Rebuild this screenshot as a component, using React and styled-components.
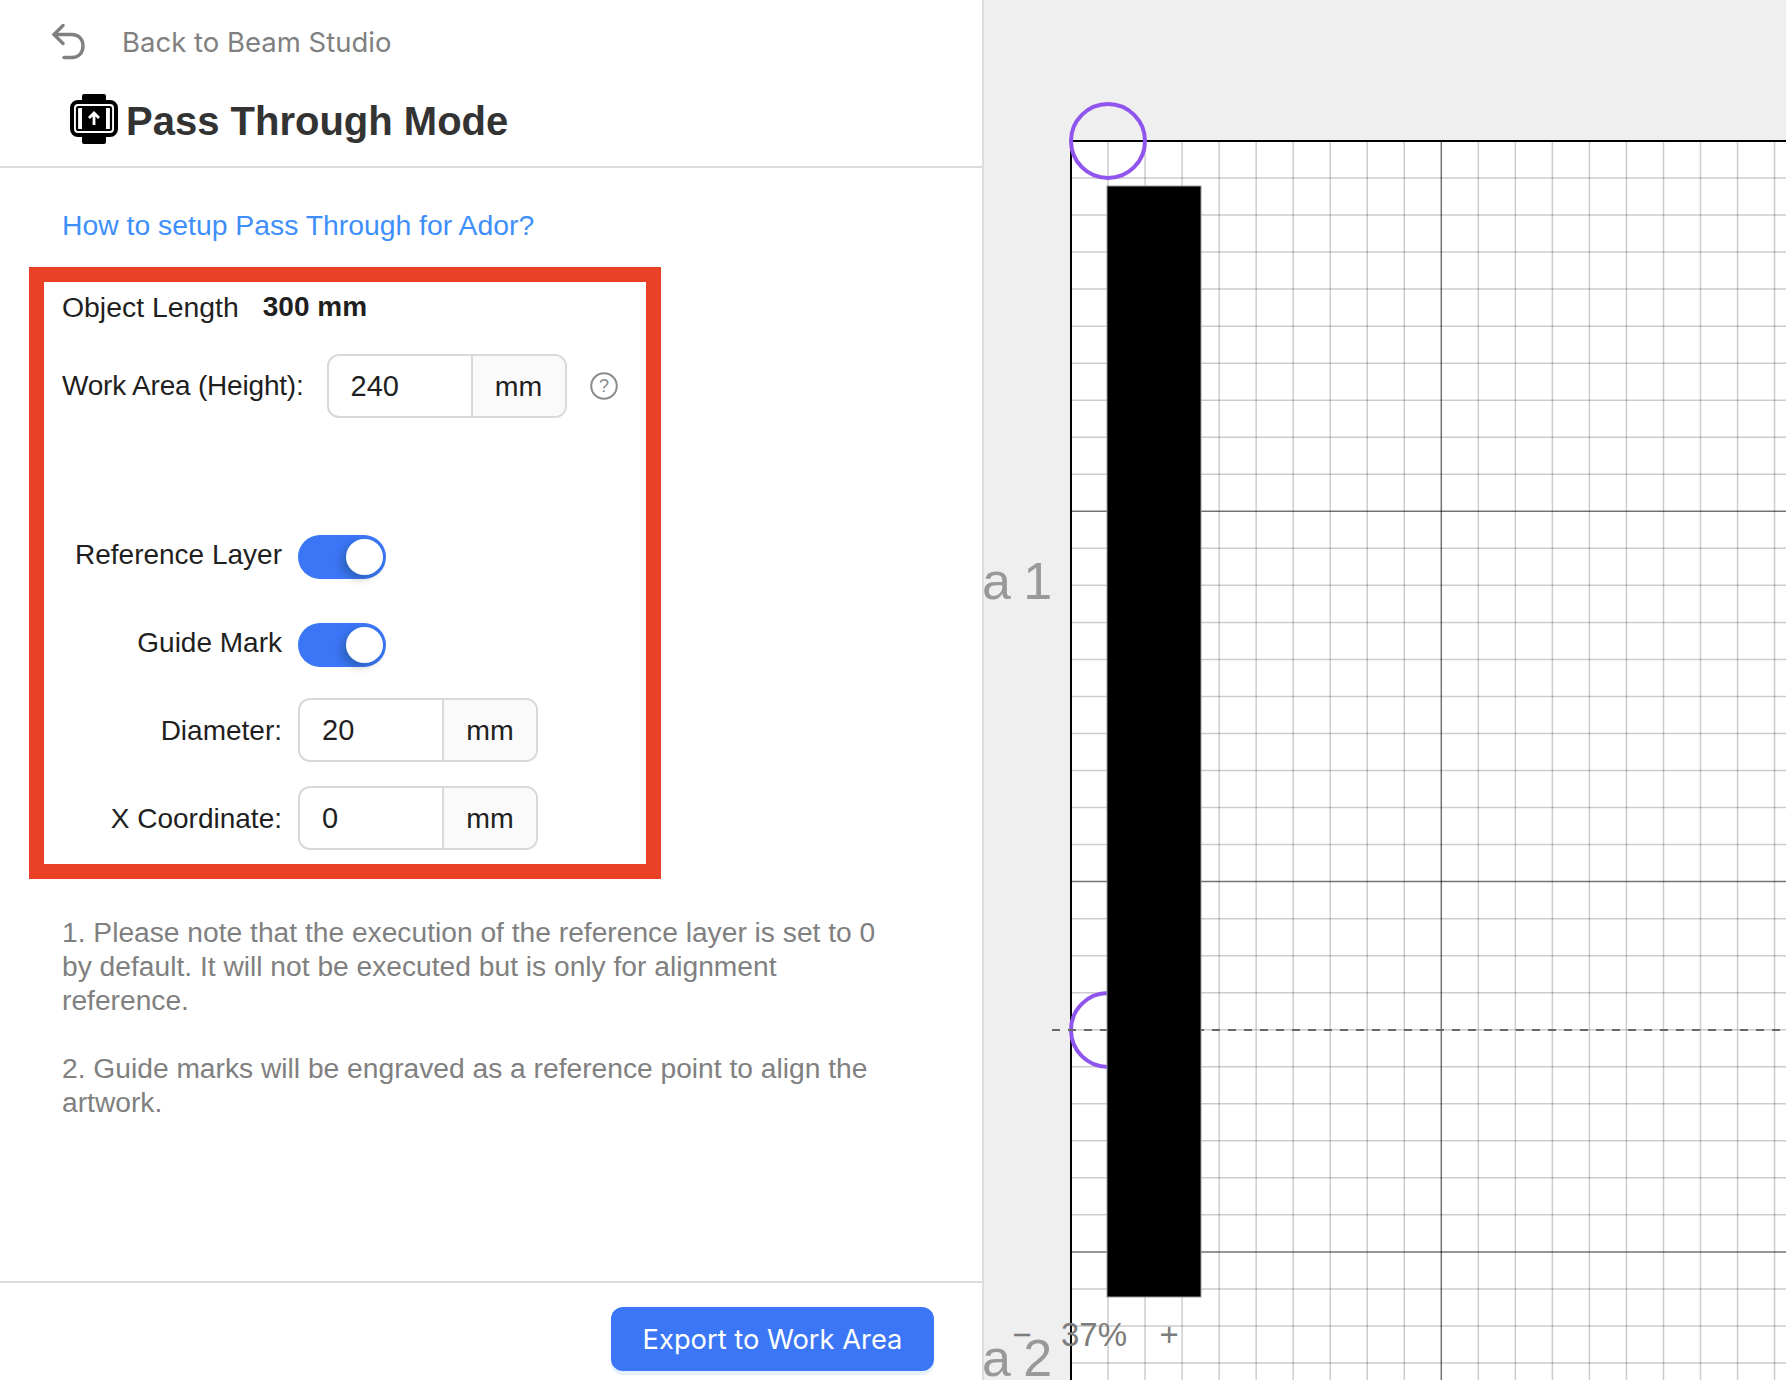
import React from 'react';
import styled, { createGlobalStyle } from 'styled-components';

const Global = createGlobalStyle`
  html, body { margin: 0; padding: 0; background: #fff; }
  body { font-family: "Liberation Sans", Arial, sans-serif; font-size: 28px; color: #1f1f1f; }
`;

const Page = styled.div`
  display: flex;
  width: 1786px;
  height: 1380px;
  overflow: hidden;
`;

const Panel = styled.aside`
  flex: 0 0 982px;
  display: flex;
  flex-direction: column;
  border-right: 2px solid #dcdcdc;
  background: #fff;
`;

const Header = styled.header`
  height: 166px;
  border-bottom: 2px solid #dcdcdc;
`;

const BackRow = styled.div`
  height: 84px;
  display: flex;
  align-items: center;
  padding-left: 52px;
  gap: 36px;
  color: #808080;
  font-family: Inter, sans-serif;
  font-size: 27.5px;
`;

const Title = styled.h1`
  margin: 0;
  height: 74px;
  display: flex;
  align-items: center;
  padding-left: 69px;
  gap: 7px;
  font-size: 40px;
  font-weight: 700;
  color: #333;
  svg {
    margin-bottom: 4px;
  }
`;

const Content = styled.div`
  flex: 1;
  padding-top: 40px;
`;

const HelpLink = styled.a`
  display: block;
  margin-left: 62px;
  line-height: 34px;
  font-size: 28.35px;
  color: #3f8ffb;
`;

const Frame = styled.section`
  box-sizing: border-box;
  width: 632px;
  height: 612px;
  margin: 25px 0 0 29px;
  border: 15px solid #ea4026;
  padding: 0 18px;
  background: #fff;
`;

const SummaryRow = styled.div`
  height: 50px;
  display: flex;
  align-items: center;
  gap: 24px;
`;

const SummaryLabel = styled.span`
  font-size: 28.4px;
`;

const WorkRow = styled.div`
  height: 64px;
  margin-top: 22px;
  display: flex;
  align-items: center;
  gap: 23px;
`;

const WorkLabel = styled.span`
  flex: 0 0 240px;
  letter-spacing: -0.2px;
  white-space: nowrap;
`;

const Fields = styled.div`
  display: grid;
  grid-template-columns: 220px auto;
  grid-auto-rows: 64px;
  row-gap: 24px;
  column-gap: 16px;
  margin-top: 104px;
  align-items: center;
  justify-content: start;
`;

const FieldLabel = styled.label`
  justify-self: end;
  margin-top: 2px;
`;

const InputBox = styled.div`
  box-sizing: border-box;
  width: 240px;
  height: 64px;
  display: flex;
  border: 2px solid #d9d9d9;
  border-radius: 12px;
  overflow: hidden;
  background: #fff;
`;

const InputValue = styled.div`
  flex: 1;
  display: flex;
  align-items: center;
  padding-left: 22px;
  font-size: 29px;
`;

const Unit = styled.div`
  flex: 0 0 92px;
  display: flex;
  align-items: center;
  justify-content: center;
  border-left: 2px solid #d9d9d9;
  background: #fafafa;
  font-size: 28.5px;
`;

const Switch = styled.div`
  position: relative;
  width: 88px;
  height: 44px;
  margin-top: 6px;
  border-radius: 22px;
  background: #3b76f6;
`;

const Knob = styled.span`
  position: absolute;
  top: 4px;
  right: 3px;
  width: 37px;
  height: 36px;
  border-radius: 50%;
  background: #fff;
  box-shadow: -4px 4px 8px rgba(0, 35, 11, 0.25);
`;

const Notes = styled.div`
  margin: 36px 0 0 62px;
  width: 830px;
  color: #808080;
  font-size: 28.2px;
  line-height: 34px;
`;

const Note = styled.p`
  margin: 0 0 34px;
`;

const Footer = styled.footer`
  box-sizing: border-box;
  height: 99px;
  border-top: 2px solid #dcdcdc;
  display: flex;
  justify-content: flex-end;
  padding: 24px 48px 0 0;
`;

const ExportButton = styled.button`
  width: 323px;
  height: 64px;
  border: 0;
  border-radius: 12px;
  background: #3b76f6;
  box-shadow: 0 4px 0 #e6f1ff;
  color: #fff;
  font-family: Inter, sans-serif;
  font-size: 27.3px;
`;

const Canvas = styled.main`
  position: relative;
  flex: 1;
  background: #efefef;
  overflow: hidden;
`;

const CanvasDrawing = styled.svg`
  display: block;
`;

const AreaLabel = styled.div`
  position: absolute;
  left: -2px;
  top: ${(p) => p.$top}px;
  color: #999;
  font-size: 52px;
  line-height: 60px;
  word-spacing: -2px;
  white-space: pre;
`;

const ZoomControl = styled.div`
  position: absolute;
  left: 26px;
  top: 1317px;
  display: flex;
  align-items: center;
  color: #7c7c7c;
  font-size: 33px;
  line-height: 36px;
`;

const ZoomBtn = styled.span`
  width: 24px;
  text-align: center;
`;

const ZoomValue = styled.span`
  margin: 0 30px 0 27px;
`;

const BackIcon = () => (
  <svg width="34" height="36" viewBox="0 0 34 36" fill="none" stroke="#808080" strokeWidth="3.4" strokeLinecap="round" strokeLinejoin="round">
    <path d="M11 1.5 2 10.5l9 9" />
    <path d="M2 10.5h18c6.5 0 11 4.500 11 11.500s-4.500 11.500-11 11.500h-8" />
  </svg>
);

const ModeIcon = () => (
  <svg width="50" height="50" viewBox="0 0 50 50">
    <path d="M15 0h20a2 2 0 0 1 2 2v5H13V2a2 2 0 0 1 2-2zM13 41h24v7a2 2 0 0 1-2 2H15a2 2 0 0 1-2-2z" fill="#000" />
    <rect x="3" y="8" width="44" height="33" rx="6" fill="#fff" stroke="#000" strokeWidth="4" />
    <rect x="8" y="13" width="34" height="23" rx="1.500" fill="none" stroke="#000" strokeWidth="2.200" />
    <rect x="13" y="13" width="24" height="23" fill="#000" />
    <path d="M25 31V19M20 24l5-5 5 5" fill="none" stroke="#fff" strokeWidth="2.800" />
  </svg>
);

const HelpIcon = () => (
  <svg width="28" height="28" viewBox="0 0 28 28">
    <circle cx="14" cy="14" r="12.800" fill="none" stroke="#8a8a8a" strokeWidth="2" />
    <text x="14" y="20" textAnchor="middle" fontSize="18" fontFamily="Liberation Sans, sans-serif" fill="#8a8a8a">?</text>
  </svg>
);

// canvas sits at x = 984 in the page, grid origin is 87,141 inside it
const GRID_X = 87;
const GRID_Y = 141;
const CELL = 37.03;
const W = 802;
const H = 1380;

const Grid = () => {
  const lines = [];
  for (let i = 0; GRID_X + i * CELL < W; i++) {
    const x = GRID_X + i * CELL;
    lines.push(<line key={`v${i}`} x1={x} y1={GRID_Y} x2={x} y2={H} stroke="#000" strokeOpacity={i % 10 === 0 ? 0.55 : 0.2} strokeWidth="1.500" />);
  }
  for (let i = 0; GRID_Y + i * CELL < H; i++) {
    const y = GRID_Y + i * CELL;
    lines.push(<line key={`h${i}`} x1={GRID_X} y1={y} x2={W} y2={y} stroke="#000" strokeOpacity={i % 10 === 0 ? 0.55 : 0.2} strokeWidth="1.500" />);
  }
  return lines;
};

const CanvasArt = () => (
  <CanvasDrawing width={W} height={H} viewBox={`0 0 ${W} ${H}`}>
    <rect x={GRID_X} y={GRID_Y} width={W - GRID_X} height={H - GRID_Y} fill="#fff" />
    <Grid />
    <line x1={GRID_X} y1={GRID_Y} x2={W} y2={GRID_Y} stroke="#000" strokeWidth="2" />
    <line x1={GRID_X} y1={GRID_Y} x2={GRID_X} y2={H} stroke="#000" strokeWidth="2" />
    <circle cx={124} cy={141} r={37} fill="none" stroke="#8f55ee" strokeWidth="4" />
    <circle cx={124} cy={1030} r={37} fill="none" stroke="#8f55ee" strokeWidth="4" />
    <line x1={68} y1={1030} x2={W} y2={1030} stroke="#666" strokeWidth="2" strokeDasharray="8 8" />
    <rect x={123} y={186} width={94} height={1111} fill="#000" stroke="#999" strokeWidth="1" />
  </CanvasDrawing>
);

const NumberInput = ({ value }) => (
  <InputBox>
    <InputValue>{value}</InputValue>
    <Unit>mm</Unit>
  </InputBox>
);

const Field = ({ label, value }) => (
  <>
    <FieldLabel>{label}</FieldLabel>
    <NumberInput value={value} />
  </>
);

const ToggleField = ({ label }) => (
  <>
    <FieldLabel>{label}</FieldLabel>
    <Switch><Knob /></Switch>
  </>
);

export default function App() {
  return (
    <Page>
      <Global />
      <Panel>
        <Header>
          <BackRow>
            <BackIcon />
            <span>Back to Beam Studio</span>
          </BackRow>
          <Title>
            <ModeIcon />
            Pass Through Mode
          </Title>
        </Header>
        <Content>
          <HelpLink>How to setup Pass Through for Ador?</HelpLink>
          <Frame>
            <SummaryRow>
              <SummaryLabel>Object Length</SummaryLabel>
              <strong>300 mm</strong>
            </SummaryRow>
            <WorkRow>
              <WorkLabel>Work Area (Height):</WorkLabel>
              <NumberInput value="240" />
              <HelpIcon />
            </WorkRow>
            <Fields>
              <ToggleField label="Reference Layer" />
              <ToggleField label="Guide Mark" />
              <Field label="Diameter:" value="20" />
              <Field label="X Coordinate:" value="0" />
            </Fields>
          </Frame>
          <Notes>
            <Note>1. Please note that the execution of the reference layer is set to 0 by default. It will not be executed but is only for alignment reference.</Note>
            <Note>2. Guide marks will be engraved as a reference point to align the artwork.</Note>
          </Notes>
        </Content>
        <Footer>
          <ExportButton>Export to Work Area</ExportButton>
        </Footer>
      </Panel>
      <Canvas>
        <CanvasArt />
        <AreaLabel $top={551}>a 1</AreaLabel>
        <AreaLabel $top={1328}>a 2</AreaLabel>
        <ZoomControl>
          <ZoomBtn>−</ZoomBtn>
          <ZoomValue>37%</ZoomValue>
          <ZoomBtn>+</ZoomBtn>
        </ZoomControl>
      </Canvas>
    </Page>
  );
}
